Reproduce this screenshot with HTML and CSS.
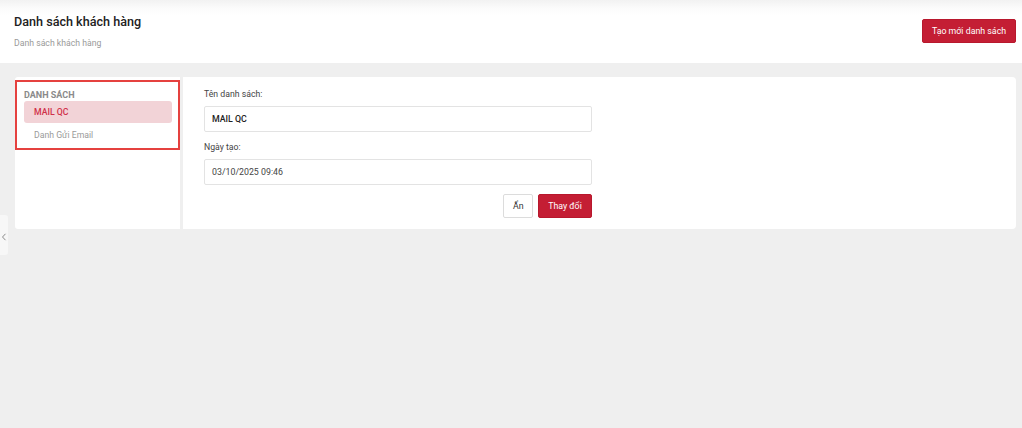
FILE: index.html
```html
<!DOCTYPE html>
<html lang="vi">
<head>
<meta charset="utf-8">
<title>Danh sách khách hàng</title>
<link rel="stylesheet" href="styles.css">
</head>
<body>
<header class="page-header">
  <div class="titles">
    <h1 class="title">Danh sách khách hàng</h1>
    <div class="subtitle">Danh sách khách hàng</div>
  </div>
  <button class="btn btn-primary btn-create">Tạo mới danh sách</button>
</header>
<main class="content">
  <aside class="side-card">
    <div class="list-box">
      <div class="list-heading">DANH SÁCH</div>
      <div class="list-item active">MAIL QC</div>
      <div class="list-item">Danh Gửi Email</div>
    </div>
  </aside>
  <section class="main-card">
    <form class="form">
      <label class="field-label">Tên danh sách:</label>
      <div class="input strong">MAIL QC</div>
      <label class="field-label">Ngày tạo:</label>
      <div class="input">03/10/2025 09:46</div>
      <div class="actions">
        <button type="button" class="btn btn-light">Ẩn</button>
        <button type="button" class="btn btn-primary">Thay đổi</button>
      </div>
    </form>
  </section>
</main>
<div class="collapse-tab">
  <svg width="6" height="8" viewBox="0 0 6 8"><path d="M4.5 0.8 L1.5 4 L4.5 7.2" fill="none" stroke="#8a8a8a" stroke-width="1"/></svg>
</div>
</body>
</html>
```

FILE: styles.css
```css
* { box-sizing: border-box; }
html, body { margin: 0; padding: 0; }
body {
  font-family: Roboto, "Noto Sans", "Liberation Sans", sans-serif;
  background: #efefef;
  width: 1022px;
  height: 428px;
  overflow: hidden;
  position: relative;
  color: #333;
}
.page-header {
  height: 63px;
  background: linear-gradient(to bottom, #f2f2f2 0px, #fbfbfb 8px, #ffffff 16px);
  display: flex;
  justify-content: space-between;
  align-items: flex-start;
  padding: 0 6px 0 14px;
}
.titles { padding-top: 13px; }
.title {
  margin: 0;
  font-size: 12.6px;
  font-weight: 500;
  color: #222;
  line-height: 18px;
}
.subtitle {
  margin-top: 6px;
  font-size: 8.7px;
  color: #9a9a9a;
  line-height: 12px;
}
.btn {
  font-family: inherit;
  font-size: 8.8px;
  border-radius: 2px;
  height: 24px;
  padding: 0 10px;
  cursor: pointer;
  line-height: 22px;
}
.btn-primary {
  background: #c41e34;
  border: 1px solid #b8182d;
  color: #fff;
  font-weight: 400;
}
.btn-light {
  background: #fff;
  border: 1px solid #dcdcdc;
  color: #333;
  padding: 0 9px;
  width: 30px;
}
.btn-create {
  margin-top: 19px;
  width: 94px;
  padding: 0;
}
.content {
  display: flex;
  gap: 3px;
  padding: 14px 6px 0 15px;
  align-items: stretch;
}
.side-card {
  width: 165px;
  height: 152px;
  background: #fff;
  border-radius: 3px 0 0 3px;
  padding-top: 3px;
}
.list-box {
  border: 2px solid #e5413f;
  height: 70px;
  padding: 8px 6px 0 7px;
}
.list-heading {
  font-size: 9px;
  font-weight: 700;
  color: #8a8a8a;
  line-height: 10px;
  margin-bottom: 1px;
}
.list-item {
  height: 22px;
  line-height: 22px;
  padding-left: 10px;
  font-size: 8.7px;
  color: #9a9a9a;
  border-radius: 3px;
}
.list-item + .list-item { margin-top: 1px; }
.list-item.active {
  background: #f2d3d7;
  color: #d03048;
  font-weight: 500;
}
.main-card {
  flex: 1;
  height: 152px;
  background: #fff;
  border-radius: 0 4px 4px 0;
  padding: 10px 0 0 21px;
}
.form {
  width: 388px;
  display: flex;
  flex-direction: column;
}
.field-label {
  font-size: 8.7px;
  color: #444;
  line-height: 14px;
  margin-bottom: 5px;
}
.input {
  height: 26px;
  border: 1px solid #e3e3e3;
  border-radius: 2px;
  padding: 0 7px;
  line-height: 24px;
  font-size: 8.8px;
  color: #444;
  margin-bottom: 8px;
}
.input.strong { font-weight: 500; color: #222; }
.actions {
  display: flex;
  justify-content: flex-end;
  gap: 5px;
  margin-top: 1px;
}
.actions .btn-primary { width: 54px; padding: 0; }
.collapse-tab {
  position: absolute;
  left: 0;
  top: 215px;
  width: 8px;
  height: 40px;
  background: #f7f7f7;
  border-radius: 0 3px 3px 0;
  display: flex;
  align-items: center;
  justify-content: center;
  padding-top: 4px;
}
```
